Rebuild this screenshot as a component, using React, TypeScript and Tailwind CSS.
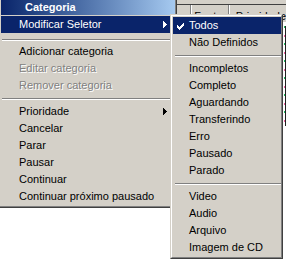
import React from 'react';

const FONT = "[font-family:'Liberation_Sans',Arial,sans-serif] text-[11px] leading-none";

type Entry = { label?: string; separator?: 'tall' | 'short'; disabled?: boolean; active?: boolean; arrow?: boolean; checked?: boolean };

const mainItems: Entry[] = [
  { label: 'Modificar Seletor', active: true, arrow: true },
  { separator: 'tall' },
  { label: 'Adicionar categoria' },
  { label: 'Editar categoria', disabled: true },
  { label: 'Remover categoria', disabled: true },
  { separator: 'short' },
  { label: 'Prioridade', arrow: true },
  { label: 'Cancelar' },
  { label: 'Parar' },
  { label: 'Pausar' },
  { label: 'Continuar' },
  { label: 'Continuar próximo pausado' },
];

const subItems: Entry[] = [
  { label: 'Todos', active: true, checked: true },
  { label: 'Não Definidos' },
  { separator: 'short' },
  { label: 'Incompletos' },
  { label: 'Completo' },
  { label: 'Aguardando' },
  { label: 'Transferindo' },
  { label: 'Erro' },
  { label: 'Pausado' },
  { label: 'Parado' },
  { separator: 'short' },
  { label: 'Video' },
  { label: 'Audio' },
  { label: 'Arquivo' },
  { label: 'Imagem de CD' },
];

function Arrow({ color }: { color: string }) {
  return (
    <svg width="4" height="7" viewBox="0 0 4 7" shapeRendering="crispEdges" className="absolute left-[162px] top-[5px]">
      <rect x="0" y="0" width="1" height="7" fill={color} />
      <rect x="1" y="1" width="1" height="5" fill={color} />
      <rect x="2" y="2" width="1" height="3" fill={color} />
      <rect x="3" y="3" width="1" height="1" fill={color} />
    </svg>
  );
}

function Check({ color }: { color: string }) {
  const px: [number, number, number][] = [
    [6, 0, 1], [5, 1, 2], [0, 2, 1], [4, 2, 3], [0, 3, 2], [3, 3, 3], [0, 4, 5], [1, 5, 3], [2, 6, 1],
  ];
  return (
    <svg width="7" height="7" viewBox="0 0 7 7" shapeRendering="crispEdges" className="absolute left-[4px] top-[6px]">
      {px.map(([x, y, w]) => (
        <rect key={`${x}-${y}`} x={x} y={y} width={w} height="1" fill={color} />
      ))}
    </svg>
  );
}

function Separator({ tall, className }: { tall: boolean; className: string }) {
  return (
    <div className={`${tall ? 'h-[10px] pt-[6px]' : 'h-[9px] pt-[4px]'} ${className}`}>
      <div className="h-px bg-[#808080]" />
      <div className="h-px bg-white" />
    </div>
  );
}

function Row({ item, indent }: { item: Entry; indent: string }) {
  const color = item.active ? 'text-white' : item.disabled ? 'text-[#808080] [text-shadow:1px_1px_0_#fff]' : 'text-black';
  return (
    <div className={`relative flex h-[17px] items-center whitespace-nowrap ${indent} ${color} ${item.active ? 'bg-[#0a246a]' : ''}`}>
      {item.checked && <Check color={item.active ? '#fff' : '#000'} />}
      <span>{item.label}</span>
      {item.arrow && <Arrow color={item.active ? '#fff' : '#000'} />}
    </div>
  );
}

function Frame({ className, children }: { className: string; children: React.ReactNode }) {
  return (
    <div className={`absolute border border-t-[#d4d0c8] border-l-[#d4d0c8] border-r-[#404040] border-b-[#404040] bg-[#d4d0c8] ${className}`}>
      <div className="border border-t-white border-l-white border-r-[#808080] border-b-[#808080] pt-px pb-px pl-px">{children}</div>
    </div>
  );
}

export default function App() {
  return (
    <div className={`relative h-[262px] w-[286px] overflow-hidden bg-white ${FONT}`}>
      {/* window behind the popup menus */}
      <div className="bg-[#d4d0c8]">
        <div className="h-[4px]" />
        <div className="h-px bg-[#404040]" />
        <div className="flex h-[17px] pl-[176px]">
          <div className="w-[31px] border-r border-r-[#808080]" />
          <div className="w-[61px] border-l border-r border-l-white border-r-[#808080] pl-[2px] pt-[6px]">Fontes</div>
          <div className="flex-1 border-l border-l-white pl-[6px] pt-[6px]">Prioridade</div>
        </div>
      </div>
      <div className="flex h-[240px]">
        <div className="flex-1" />
        <div className="mt-[4px] flex h-[100px] w-[3px] pl-px">
          <div className="w-px bg-[repeating-linear-gradient(to_bottom,#20c060_0_2px,transparent_2px_9px,#f060a0_9px_11px,transparent_11px_17px)]" />
          <div className="w-px bg-[#202020]" />
        </div>
      </div>

      <Frame className="left-[-2px] top-[-3px] w-[179px]">
        <div className="flex h-[15px] items-center bg-linear-to-r from-[#0a246a] to-[#a6caf0] pl-[24px] font-bold text-white">
          Categoria
        </div>
        <div className="h-px" />
        {mainItems.map((item, i) =>
          item.separator ? (
            <Separator key={i} tall={item.separator === 'tall'} className="mr-px ml-[1px]" />
          ) : (
            <Row key={i} item={item} indent="pl-[18px]" />
          )
        )}
      </Frame>

      <Frame className="left-[170px] top-[14px] w-[113px]">
        {subItems.map((item, i) =>
          item.separator ? <Separator key={i} tall={false} className="ml-[2px]" /> : <Row key={i} item={item} indent="pl-[16px]" />
        )}
      </Frame>
    </div>
  );
}
